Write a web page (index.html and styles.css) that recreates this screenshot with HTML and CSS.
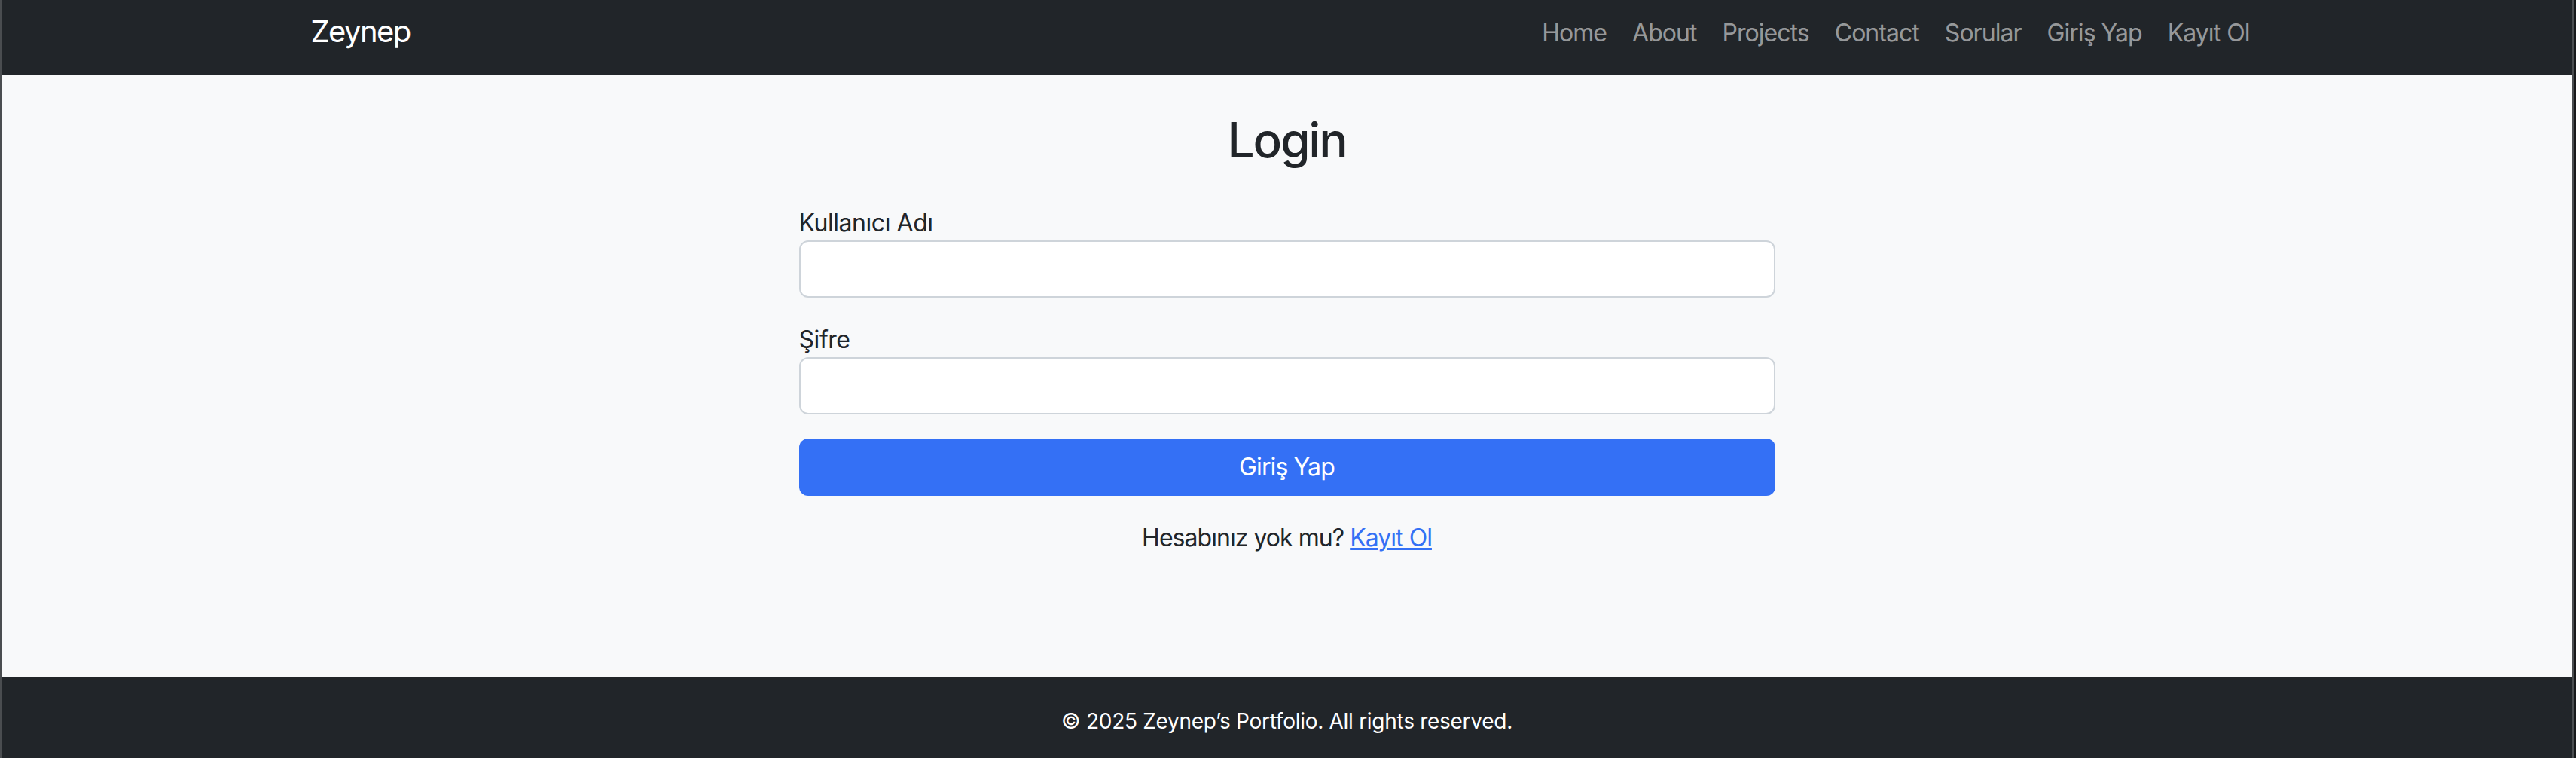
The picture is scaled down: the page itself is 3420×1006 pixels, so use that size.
FILE: index.html
```html
<!DOCTYPE html>
<html lang="tr">
<head>
<meta charset="utf-8">
<title>Login - Zeynep</title>
<link rel="stylesheet" href="styles.css">
</head>
<body>
<div class="frame">
  <div class="page">
    <header class="navbar">
      <div class="container nav-inner">
        <a class="brand" href="#">Zeynep</a>
        <nav class="nav-links">
          <a href="#">Home</a>
          <a href="#">About</a>
          <a href="#">Projects</a>
          <a href="#">Contact</a>
          <a href="#">Sorular</a>
          <a href="#">Giriş Yap</a>
          <a href="#">Kayıt Ol</a>
        </nav>
      </div>
    </header>
    <main class="main">
      <div class="form-wrap">
        <h2 class="title">Login</h2>
        <form class="login-form">
          <div class="field">
            <label class="label" for="username">Kullanıcı Adı</label>
            <input class="input" id="username" type="text">
          </div>
          <div class="field">
            <label class="label" for="password">Şifre</label>
            <input class="input" id="password" type="password">
          </div>
          <button class="btn" type="button">Giriş Yap</button>
        </form>
        <p class="signup">Hesabınız yok mu? <a href="#">Kayıt Ol</a></p>
      </div>
    </main>
    <footer class="footer">
      <p>© 2025 Zeynep’s Portfolio. All rights reserved.</p>
    </footer>
  </div>
</div>
</body>
</html>
```

FILE: styles.css
```css
* { box-sizing: border-box; }
html, body { margin: 0; padding: 0; }
body {
  font-family: Inter, "Noto Sans", "Liberation Sans", sans-serif;
  color: #212529;
  background: #f8f9fa;
  letter-spacing: -0.028em;
}
.frame {
  border-right: 3px solid #17191b;
  min-height: 1006px;
}
.page {
  min-height: 1006px;
  display: flex;
  flex-direction: column;
  border-left: 2px solid #4a4d50;
  border-right: 2px solid #4a4d50;
}
.navbar {
  background: #212529;
  height: 99px;
  padding-top: 12px;
}
.container {
  max-width: 2640px;
  margin: 0 auto;
  padding: 0 24px;
}
.nav-inner {
  display: flex;
  align-items: center;
  justify-content: space-between;
}
.brand {
  color: #fff;
  text-decoration: none;
  font-size: 40px;
  line-height: 60px;
  letter-spacing: -0.04em;
}
.nav-links {
  display: flex;
  padding-top: 3px;
}
.nav-links a {
  color: rgba(255, 255, 255, 0.55);
  text-decoration: none;
  font-size: 32px;
  line-height: 48px;
  padding: 0 17px;
  letter-spacing: -0.03em;
}
.nav-links a:last-child { padding-right: 18px; }
.main {
  flex: 1;
  background: #f8f9fa;
  padding-top: 48px;
}
.form-wrap {
  width: 1296px;
  margin: 0 auto;
}
.title {
  margin: 0 0 48px;
  text-align: center;
  font-size: 64px;
  line-height: 77px;
  font-weight: 500;
  letter-spacing: -0.035em;
}
.field { margin-bottom: 32px; }
.label {
  display: block;
  font-size: 32px;
  line-height: 47px;
}
.input {
  display: block;
  width: 100%;
  height: 76px;
  border: 2px solid #ced4da;
  border-radius: 12px;
  background: #fff;
  font-size: 32px;
  padding: 12px 24px;
}
.btn {
  display: block;
  width: 100%;
  height: 76px;
  border: none;
  border-radius: 12px;
  background: #3470f5;
  color: #fff;
  font-family: inherit;
  font-size: 32px;
  line-height: 48px;
  letter-spacing: -0.028em;
}
.signup {
  margin: 32px 0 0;
  text-align: center;
  font-size: 32px;
  line-height: 48px;
  letter-spacing: -0.03em;
}
.signup a { color: #3470f5; }
.footer {
  background: #212529;
  color: #fff;
  height: 107px;
  padding-top: 37px;
  text-align: center;
}
.footer p {
  margin: 0;
  font-size: 28px;
  line-height: 42px;
  letter-spacing: -0.01em;
}
```
